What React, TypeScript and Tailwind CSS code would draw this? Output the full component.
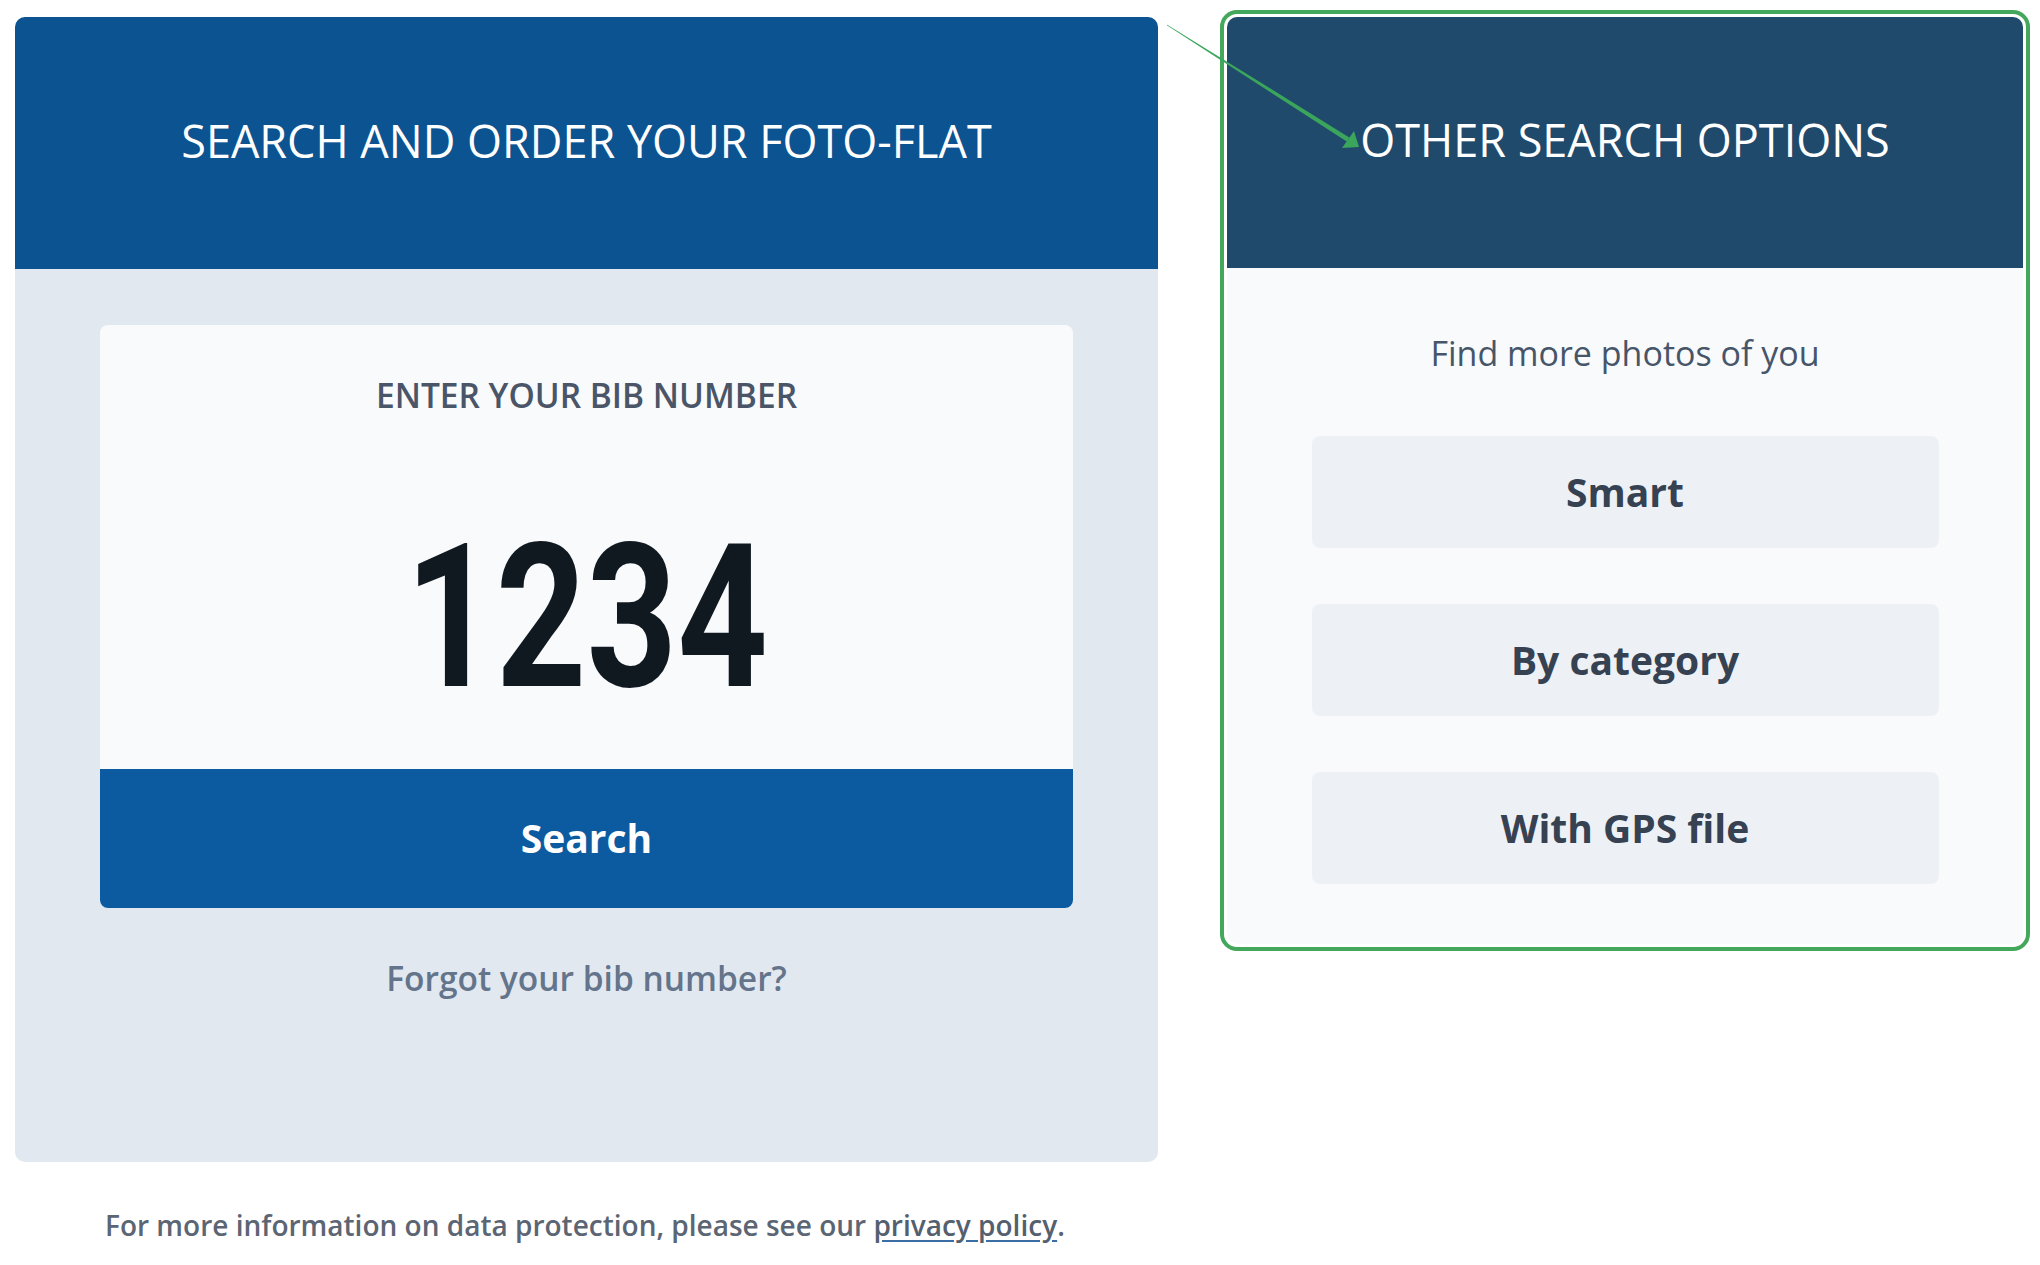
import React from 'react';

const font = "font-['Open_Sans',sans-serif]";

function SearchPanel() {
  return (
    <div className="w-[1143px] flex flex-col">
      <div className="rounded-[10px] overflow-hidden bg-[#e2e8f0] flex flex-col">
        <div className="h-[252px] bg-[#0b5391] flex items-center justify-center pb-[5px]">
          <h1 className={`${font} text-[45px] text-white font-normal`}>SEARCH AND ORDER YOUR FOTO-FLAT</h1>
        </div>
        <div className="flex flex-col px-[85px] pt-[56px] pb-[161px]">
          <div className="rounded-[8px] overflow-hidden bg-[#f8fafc] flex flex-col">
            <div className="flex flex-col items-center pt-[48px]">
              <div className={`${font} text-[33.5px] leading-[45px] font-semibold text-[#4a5568]`}>ENTER YOUR BIB NUMBER</div>
              <div className="mt-[100px] mb-[51px] font-['Roboto',sans-serif] font-bold text-[200px] leading-none text-[#101820] scale-x-[0.79]">
                1234
              </div>
            </div>
            <button className="h-[139px] bg-[#0c5ba1] flex items-center justify-center">
              <span className={`${font} text-[39px] font-bold text-white`}>Search</span>
            </button>
          </div>
          <div className={`${font} mt-[48px] text-center text-[33.5px] leading-[45px] font-semibold text-[#64748b]`}>
            Forgot your bib number?
          </div>
        </div>
      </div>
      <p className={`${font} mt-[44px] pl-[90px] text-[28px] leading-[38px] font-semibold text-[#5b6573]`}>
        For more information on data protection, please see our{' '}
        <a className="underline decoration-[#3b6ea5] underline-offset-4 text-[#55606e]">privacy policy</a>.
      </p>
    </div>
  );
}

function OptionsPanel() {
  const options = ['Smart', 'By category', 'With GPS file'];
  return (
    <div className="w-[796px] rounded-[10px] outline-[4px] outline-offset-[3px] outline-[#43a75c] overflow-hidden bg-[#f8fafc] flex flex-col">
      <div className="h-[251px] bg-[#1f4a6c] flex items-center justify-center pb-[5px]">
        <h2 className={`${font} text-[45px] text-white font-normal`}>OTHER SEARCH OPTIONS</h2>
      </div>
      <div className="flex flex-col items-center pt-[63px] pb-[60px]">
        <div className={`${font} text-[34px] leading-[45px] text-[#475569]`}>Find more photos of you</div>
        <div className="mt-[60px] flex flex-col gap-[56px]">
          {options.map(o => (
            <button key={o} className="w-[627px] h-[112px] rounded-[8px] bg-[#edf1f5] flex items-center justify-center">
              <span className={`${font} text-[39px] font-bold text-[#364152]`}>{o}</span>
            </button>
          ))}
        </div>
      </div>
    </div>
  );
}

export default function App() {
  return (
    <div className="relative w-[2040px] h-[1265px] bg-white overflow-hidden">
      <div className="flex items-start gap-[69px] pl-[15px] pt-[17px]">
        <SearchPanel />
        <OptionsPanel />
      </div>
      {/* annotation arrow */}
      <svg className="absolute inset-0 pointer-events-none" width="2040" height="1265" viewBox="0 0 2040 1265">
        <polygon points="1166.8,25.3 1167.2,24.7 1349.3,137.4 1346.7,141.6" fill="#3ba55c" />
        <polygon points="1354,131 1342,148 1359,147" fill="#3ba55c" />
      </svg>
    </div>
  );
}
